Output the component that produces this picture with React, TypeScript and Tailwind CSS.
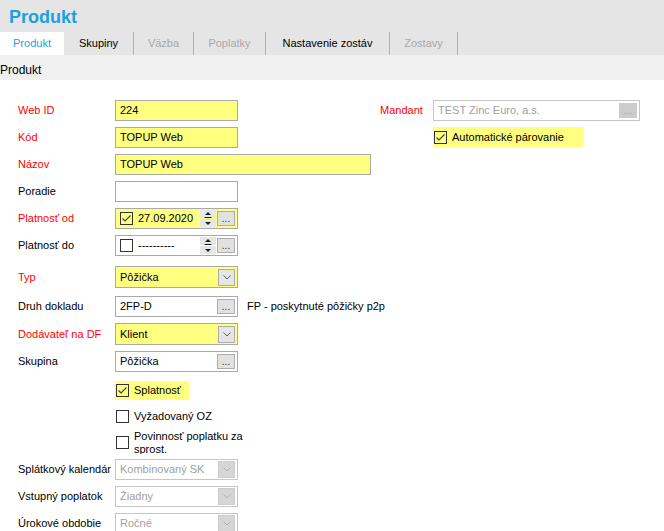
import type { ReactNode } from 'react'

const tabs = [
  { label: 'Produkt', w: 'w-[64px]', tone: 'active' },
  { label: 'Skupiny', w: 'w-[70px]', tone: 'normal' },
  { label: 'Väzba', w: 'w-[60px]', tone: 'disabled' },
  { label: 'Poplatky', w: 'w-[72px]', tone: 'disabled' },
  { label: 'Nastavenie zostáv', w: 'w-[124px]', tone: 'normal' },
  { label: 'Zostavy', w: 'w-[68px]', tone: 'disabled' },
]

function CheckBox({ checked }: { checked?: boolean }) {
  return (
    <span className="flex h-[13px] w-[13px] shrink-0 items-center justify-center border border-[#333]">
      {checked && (
        <svg width="11" height="11" viewBox="0 0 11 11">
          <path d="M1.5 5.5 L4 8 L9.5 2.5" fill="none" stroke="#444" strokeWidth="1.2" />
        </svg>
      )}
    </span>
  )
}

function DotsButton({ disabled, afterSpin }: { disabled?: boolean; afterSpin?: boolean }) {
  return (
    <span
      className={`${afterSpin ? 'ml-[1px]' : 'ml-auto'} mr-[2px] flex h-[15px] w-[18px] shrink-0 items-end justify-center border pb-[1px] text-[10px] leading-[10px] ${
        disabled ? 'border-[#cccccc] bg-[#cccccc] text-[#999]' : 'border-[#adadad] bg-[#e1e1e1] text-[#333]'
      }`}
    >
      ...
    </span>
  )
}

function ComboButton({ disabled }: { disabled?: boolean }) {
  return (
    <span
      className={`ml-auto mr-[2px] flex h-[17px] w-[17px] shrink-0 items-center justify-center border ${
        disabled ? 'border-[#cccccc] bg-[#d6d6d6]' : 'border-[#acacac] bg-[#e5e5e5]'
      }`}
    >
      <svg width="8" height="5" viewBox="0 0 8 5">
        <path d="M0.5 0.5 L4 4 L7.5 0.5" fill="none" stroke={disabled ? '#b0b0b0' : '#606060'} strokeWidth="1" />
      </svg>
    </span>
  )
}

function Spin() {
  return (
    <span className="ml-auto flex h-[17px] w-[16px] shrink-0 flex-col gap-[1px]">
      <span className="flex h-[8px] items-center justify-center bg-[#e6e6e6]">
        <svg width="16" height="8" viewBox="0 0 16 8">
          <path d="M5 5 L8 2 L11 5 Z" fill="#222" />
          <path d="M4.5 7.5 H11.5" stroke="#222" strokeWidth="1" />
        </svg>
      </span>
      <span className="flex h-[8px] items-center justify-center bg-[#e6e6e6]">
        <svg width="16" height="8" viewBox="0 0 16 8">
          <path d="M5 3 L8 6 L11 3 Z" fill="#222" />
        </svg>
      </span>
    </span>
  )
}

function Field({
  w = 'w-[123px]',
  h = 'h-[21px]',
  yellow,
  disabled,
  children,
}: {
  w?: string
  h?: string
  yellow?: boolean
  disabled?: boolean
  children?: ReactNode
}) {
  return (
    <div
      className={`flex ${w} ${h} shrink-0 items-center border pl-[4px] ${
        yellow ? 'bg-[#ffff80]' : 'bg-white'
      } ${disabled ? 'border-[#c6c6c6] text-[#a0a0a0]' : 'border-[#a9a9a9] text-black'}`}
    >
      {children}
    </div>
  )
}

function Row({
  label,
  red,
  className = '',
  children,
}: {
  label?: string
  red?: boolean
  className?: string
  children: ReactNode
}) {
  return (
    <div className={`flex items-center pl-[18px] ${className}`}>
      <div className={`w-[97px] shrink-0 whitespace-nowrap ${red ? 'text-[#f00]' : 'text-black'}`}>{label}</div>
      {children}
    </div>
  )
}

export default function App() {
  return (
    <div className="h-[531px] w-[664px] overflow-hidden bg-white font-['Liberation_Sans',Arial,sans-serif] text-[11px] text-black">
      {/* header */}
      <div className="bg-[#e5e5e5]">
        <div className="pl-[9px] pt-[7px] text-[18px] font-bold leading-[21px] text-[#1ba1e2]">Produkt</div>
        <div className="mt-[4px] flex h-[23px]">
          {tabs.map((t) => (
            <div
              key={t.label}
              className={`flex ${t.w} shrink-0 items-center justify-center whitespace-nowrap ${
                t.tone === 'active'
                  ? 'bg-white text-[#1ba1e2]'
                  : t.tone === 'disabled'
                    ? 'border-r border-[#b0b0b0] text-[#a8a8a8]'
                    : 'border-r border-[#b0b0b0] text-black'
              }`}
            >
              {t.label}
            </div>
          ))}
        </div>
      </div>

      <div className="h-[25px] bg-[#f0f0f0] pt-[8px] text-[12px] leading-[14px]">Produkt</div>

      <div className="flex">
        {/* left column */}
        <div className="w-[380px] shrink-0">
          <Row label="Web ID" red className="mt-[20px]">
            <Field yellow>224</Field>
          </Row>
          <Row label="Kód" red className="mt-[6px]">
            <Field yellow>TOPUP Web</Field>
          </Row>
          <Row label="Názov" red className="mt-[6px]">
            <Field yellow w="w-[256px]">TOPUP Web</Field>
          </Row>
          <Row label="Poradie" className="mt-[6px]">
            <Field />
          </Row>
          <Row label="Platnosť od" red className="mt-[6px]">
            <Field yellow>
              <CheckBox checked />
              <span className="ml-[5px]">27.09.2020</span>
              <Spin />
              <DotsButton afterSpin />
            </Field>
          </Row>
          <Row label="Platnosť do" className="mt-[6px]">
            <Field>
              <CheckBox />
              <span className="ml-[5px]">----------</span>
              <Spin />
              <DotsButton afterSpin />
            </Field>
          </Row>
          <Row label="Typ" red className="mt-[10px]">
            <Field yellow h="h-[22px]">
              Pôžička
              <ComboButton />
            </Field>
          </Row>
          <Row label="Druh dokladu" className="mt-[8px]">
            <Field>
              2FP-D
              <DotsButton />
            </Field>
            <span className="ml-[9px] whitespace-nowrap">FP - poskytnuté pôžičky p2p</span>
          </Row>
          <Row label="Dodávateľ na DF" red className="mt-[6px]">
            <Field yellow h="h-[22px]">
              Klient
              <ComboButton />
            </Field>
          </Row>
          <Row label="Skupina" className="mt-[6px]">
            <Field>
              Pôžička
              <DotsButton />
            </Field>
          </Row>
          <Row className="mt-[9px]">
            <div className="flex h-[19px] w-[74px] items-center bg-[#ffff80] pl-[1px]">
              <CheckBox checked />
              <span className="ml-[5px]">Splatnosť</span>
            </div>
          </Row>
          <Row className="mt-[6px]">
            <div className="flex h-[21px] items-center pl-[1px]">
              <CheckBox />
              <span className="ml-[5px]">Vyžadovaný OZ</span>
            </div>
          </Row>
          <Row className="mt-[4px]">
            <div className="flex h-[23px] items-center overflow-hidden pl-[1px]">
              <CheckBox />
              <span className="ml-[5px] leading-[13px]">
                Povinnosť poplatku za
                <br />
                sprost.
              </span>
            </div>
          </Row>
          <Row label="Splátkový kalendár" className="mt-[5px]">
            <Field disabled>
              Kombinovaný SK
              <ComboButton disabled />
            </Field>
          </Row>
          <Row label="Vstupný poplatok" className="mt-[6px]">
            <Field disabled>
              Žiadny
              <ComboButton disabled />
            </Field>
          </Row>
          <Row label="Úrokové obdobie" className="mt-[6px]">
            <Field disabled>
              Ročné
              <ComboButton disabled />
            </Field>
          </Row>
        </div>

        {/* right column */}
        <div className="pt-[20px]">
          <div className="flex h-[21px] items-center">
            <span className="w-[43px] whitespace-nowrap text-[#f00]">Mandant</span>
            <div className="ml-[10px]">
              <Field disabled w="w-[207px]">
                TEST Zinc Euro, a.s.
                <DotsButton disabled />
              </Field>
            </div>
          </div>
          <div className="ml-[53px] mt-[6px] flex h-[20px] w-[150px] items-center bg-[#ffff80] pl-[1px]">
            <CheckBox checked />
            <span className="ml-[5px]">Automatické párovanie</span>
          </div>
        </div>
      </div>
    </div>
  )
}
